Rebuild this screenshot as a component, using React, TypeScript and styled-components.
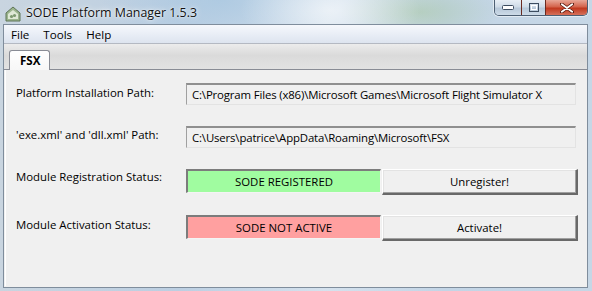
import React from "react";
import styled, { createGlobalStyle } from "styled-components";

const GlobalStyle = createGlobalStyle`
  html, body {
    margin: 0;
    padding: 0;
    background: #c7d6e4;
  }
  * {
    box-sizing: border-box;
  }
`;

const Frame = styled.div`
  width: 592px;
  height: 291px;
  overflow: hidden;
  display: flex;
  flex-direction: column;
  padding: 0 4px 3px 3px;
  font-family: "Open Sans", "Noto Sans", sans-serif;
  background:
    radial-gradient(ellipse 90px 40px at 330px 10px, rgba(255, 255, 255, 0.55), transparent),
    radial-gradient(ellipse 80px 30px at 420px 12px, rgba(150, 190, 120, 0.35), transparent),
    radial-gradient(ellipse 120px 50px at 220px 0px, rgba(170, 200, 225, 0.8), transparent),
    linear-gradient(90deg, #c9d5e0 0%, #bccfe2 30%, #d5e2ee 55%, #c3d5e6 75%, #c6d7e6 100%);
`;

const TitleBar = styled.div`
  height: 24px;
  display: flex;
  align-items: flex-start;
  flex-shrink: 0;
`;

const AppIcon = styled.div`
  width: 16px;
  height: 16px;
  margin: 5px 0 0 2px;
`;

const Title = styled.div`
  margin: 4px 0 0 5px;
  font-size: 12.4px;
  color: #111;
  text-shadow: 0 0 6px rgba(255, 255, 255, 0.9), 0 0 2px rgba(255, 255, 255, 0.9);
`;

const Controls = styled.div`
  margin-left: auto;
  display: flex;
  height: 16px;
  border: 1px solid #4d5f73;
  border-top: none;
  border-radius: 0 0 5px 5px;
  overflow: hidden;
  box-shadow: 0 0 0 1px rgba(255, 255, 255, 0.5);
`;

const CtrlButton = styled.div<{ $w: number; $close?: boolean }>`
  width: ${(p) => p.$w}px;
  height: 100%;
  display: flex;
  align-items: center;
  justify-content: center;
  background: ${(p) =>
    p.$close
      ? "linear-gradient(180deg, #e8a797 0%, #d4644c 45%, #c1391f 55%, #d5705a 100%)"
      : "linear-gradient(180deg, #e7eef5 0%, #cfdbe7 45%, #b7c8d9 55%, #cddbe8 100%)"};
  & + & {
    border-left: 1px solid ${(p) => (p.$close ? "#6a2a20" : "#8b9aab")};
  }
`;

const Client = styled.div`
  flex: 1;
  display: flex;
  flex-direction: column;
  border: 1px solid #7f8d9c;
  background: #f0f0f0;
`;

const MenuBar = styled.div`
  height: 19px;
  display: flex;
  align-items: center;
  background: linear-gradient(180deg, #f6f8fc 0%, #e9eef6 50%, #dde4ef 100%);
  border-bottom: 1px solid #b4b9c2;
  font-size: 11.6px;
  color: #000;
`;

const MenuItem = styled.span`
  padding: 0 7px;
`;

const TabStrip = styled.div`
  height: 26px;
  display: flex;
  align-items: flex-end;
  padding-left: 5px;
  background: linear-gradient(180deg, #ececec 0%, #dadada 45%, #e2e2e2 100%);
  border-bottom: 1px solid #898c95;
`;

const Tab = styled.div`
  height: 20px;
  padding: 0 9px 0 10px;
  display: flex;
  align-items: center;
  margin-bottom: -1px;
  background: linear-gradient(180deg, #ffffff 0%, #f7f7f7 100%);
  border: 1px solid #898c95;
  border-bottom: none;
  border-radius: 3px 3px 0 0;
  font-size: 11.6px;
  font-weight: 700;
  color: #000;
  position: relative;
  z-index: 1;
`;

const Panel = styled.div`
  flex: 1;
  margin: 0 1px 1px 1px;
  border-left: 1px solid #fff;
  padding: 13px 0 0 10px;
  display: grid;
  grid-template-columns: 170px 195px 197px;
  grid-template-rows: 22px 22px 25px 25px;
  row-gap: 21px;
  align-items: stretch;
  font-size: 11.4px;
  color: #000;
`;

const Label = styled.div<{ $top: number }>`
  padding-top: ${(p) => p.$top}px;
  white-space: nowrap;
`;

const PathBox = styled.div`
  grid-column: 2 / span 2;
  margin-right: 2px;
  display: flex;
  align-items: center;
  padding-left: 5px;
  letter-spacing: -0.15px;
  background: #f0f0f0;
  border-top: 2px solid #8f8f8f;
  border-left: 1px solid #a0a0a0;
  border-right: 1px solid #e3e3e3;
  border-bottom: 1px solid #e3e3e3;
  white-space: nowrap;
`;

const StatusBox = styled.div<{ $bg: string }>`
  display: flex;
  align-items: center;
  justify-content: center;
  background: ${(p) => p.$bg};
  border-top: 2px solid #7c7c7c;
  border-left: 2px solid #7c7c7c;
  border-right: 1px solid #f4f4f4;
  border-bottom: 1px solid #f4f4f4;
  height: 24px;
`;

const ActionButton = styled.div`
  margin-left: 1px;
  height: 26px;
  display: flex;
  align-items: center;
  justify-content: center;
  background: #f0f0f0;
  border-top: 1px solid #ffffff;
  border-left: 1px solid #ffffff;
  border-right: 2px solid #696969;
  border-bottom: 2px solid #696969;
  box-shadow: inset -1px -1px 0 #a0a0a0, inset 1px 1px 0 #e3e3e3;
`;

function WindowIcon() {
  return (
    <svg width="16" height="16" viewBox="0 0 16 16">
      <path d="M8 1 L15 7 L15 15 L1 15 L1 7 Z" fill="#9bb58d" stroke="#5e7456" strokeWidth="1" />
      <path d="M3 8 L8 4 L13 8 L13 13 L3 13 Z" fill="#dfe9d6" />
      <circle cx="6.5" cy="10.5" r="1.6" fill="#7d9a70" />
      <circle cx="9.5" cy="9.5" r="1.6" fill="#7d9a70" />
    </svg>
  );
}

export default function App() {
  return (
    <>
      <GlobalStyle />
      <Frame>
        <TitleBar>
          <AppIcon>
            <WindowIcon />
          </AppIcon>
          <Title>SODE Platform Manager 1.5.3</Title>
          <Controls>
            <CtrlButton $w={26}>
              <svg width="12" height="6" viewBox="0 0 12 6">
                <rect x="0.5" y="0.5" width="11" height="4" rx="1" fill="#fff" stroke="#3d4d60" />
              </svg>
            </CtrlButton>
            <CtrlButton $w={24}>
              <svg width="10" height="9" viewBox="0 0 10 9">
                <rect x="0.5" y="0.5" width="9" height="8" fill="none" stroke="#3d4d60" />
                <rect x="2.5" y="2.5" width="5" height="4" fill="none" stroke="#fff" />
              </svg>
            </CtrlButton>
            <CtrlButton $w={42} $close>
              <svg width="14" height="10" viewBox="0 0 14 10">
                <path d="M1.5 1 L12.5 9 M12.5 1 L1.5 9" stroke="#5a1d12" strokeWidth="3.4" strokeLinecap="round" />
                <path d="M1.8 1.2 L12.2 8.8 M12.2 1.2 L1.8 8.8" stroke="#fff" strokeWidth="1.8" strokeLinecap="round" />
              </svg>
            </CtrlButton>
          </Controls>
        </TitleBar>
        <Client>
          <MenuBar>
            <MenuItem>File</MenuItem>
            <MenuItem>Tools</MenuItem>
            <MenuItem>Help</MenuItem>
          </MenuBar>
          <TabStrip>
            <Tab>FSX</Tab>
          </TabStrip>
          <Panel>
            <Label $top={2}>Platform Installation Path:</Label>
            <PathBox>C:\Program Files (x86)\Microsoft Games\Microsoft Flight Simulator X</PathBox>
            <Label $top={1}>'exe.xml' and 'dll.xml' Path:</Label>
            <PathBox>C:\Users\patrice\AppData\Roaming\Microsoft\FSX</PathBox>
            <Label $top={0}>Module Registration Status:</Label>
            <StatusBox $bg="#a0fca0">SODE REGISTERED</StatusBox>
            <ActionButton>Unregister!</ActionButton>
            <Label $top={2}>Module Activation Status:</Label>
            <StatusBox $bg="#ffa0a0">SODE NOT ACTIVE</StatusBox>
            <ActionButton>Activate!</ActionButton>
          </Panel>
        </Client>
      </Frame>
    </>
  );
}
